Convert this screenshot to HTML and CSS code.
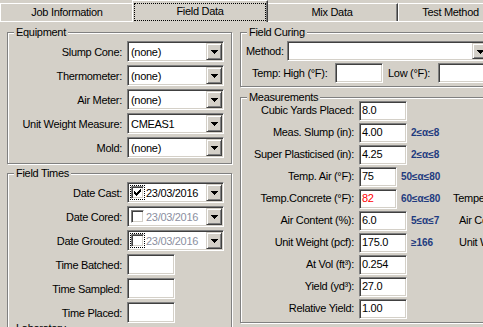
FILE: index.html
```html
<!DOCTYPE html>
<html lang="en">
<head>
    <meta charset="UTF-8">
    <title>Field Data</title>
    <link rel="stylesheet" href="styles.css">
</head>
<body>

    <div class="tabs">
        <div class="tab tab_job">Job Information</div>
        <div class="tab tab_field active"><span class="focus">Field Data</span></div>
        <div class="tab tab_mix">Mix Data</div>
        <div class="tab tab_test">Test Method</div>
    </div>

    <div class="panel">
        <div class="col_left">

            <div class="group equipment">
                <span class="legend">Equipment</span>
                <div class="form">
                    <span class="lbl">Slump Cone:</span>
                    <div class="combo"><span class="val">(none)</span><span class="drop"><svg width="7" height="4" viewBox="0 0 7 4"><path d="M0 0h7v1H0zM1 1h5v1H1zM2 2h3v1H2zM3 3h1v1H3z"/></svg></span></div>
                    <span class="lbl">Thermometer:</span>
                    <div class="combo"><span class="val">(none)</span><span class="drop"><svg width="7" height="4" viewBox="0 0 7 4"><path d="M0 0h7v1H0zM1 1h5v1H1zM2 2h3v1H2zM3 3h1v1H3z"/></svg></span></div>
                    <span class="lbl">Air Meter:</span>
                    <div class="combo"><span class="val">(none)</span><span class="drop"><svg width="7" height="4" viewBox="0 0 7 4"><path d="M0 0h7v1H0zM1 1h5v1H1zM2 2h3v1H2zM3 3h1v1H3z"/></svg></span></div>
                    <span class="lbl">Unit Weight Measure:</span>
                    <div class="combo"><span class="val">CMEAS1</span><span class="drop"><svg width="7" height="4" viewBox="0 0 7 4"><path d="M0 0h7v1H0zM1 1h5v1H1zM2 2h3v1H2zM3 3h1v1H3z"/></svg></span></div>
                    <span class="lbl">Mold:</span>
                    <div class="combo"><span class="val">(none)</span><span class="drop"><svg width="7" height="4" viewBox="0 0 7 4"><path d="M0 0h7v1H0zM1 1h5v1H1zM2 2h3v1H2zM3 3h1v1H3z"/></svg></span></div>
                </div>
            </div>

            <div class="group times">
                <span class="legend">Field Times</span>
                <div class="form">
                    <span class="lbl">Date Cast:</span>
                    <div class="combo date">
                        <span class="chk_focus on"><span class="chk"><svg width="7" height="7" viewBox="0 0 7 7"><path d="M6 0h1v1H6zM5 1h2v1H5zM0 2h1v1H0zM4 2h3v1H4zM0 3h2v1H0zM3 3h3v1H3zM0 4h5v1H0zM1 5h3v1H1zM2 6h1v1H2z"/></svg></span></span>
                        <span class="val">23/03/2016</span>
                        <span class="drop"><svg width="7" height="4" viewBox="0 0 7 4"><path d="M0 0h7v1H0zM1 1h5v1H1zM2 2h3v1H2zM3 3h1v1H3z"/></svg></span>
                    </div>
                    <span class="lbl">Date Cored:</span>
                    <div class="combo date off">
                        <span class="chk_focus"><span class="chk"></span></span>
                        <span class="val">23/03/2016</span>
                        <span class="drop"><svg width="7" height="4" viewBox="0 0 7 4"><path d="M0 0h7v1H0zM1 1h5v1H1zM2 2h3v1H2zM3 3h1v1H3z"/></svg></span>
                    </div>
                    <span class="lbl">Date Grouted:</span>
                    <div class="combo date off">
                        <span class="chk_focus on"><span class="chk"></span></span>
                        <span class="val">23/03/2016</span>
                        <span class="drop"><svg width="7" height="4" viewBox="0 0 7 4"><path d="M0 0h7v1H0zM1 1h5v1H1zM2 2h3v1H2zM3 3h1v1H3z"/></svg></span>
                    </div>
                    <span class="lbl">Time Batched:</span>
                    <div class="edit"></div>
                    <span class="lbl">Time Sampled:</span>
                    <div class="edit"></div>
                    <span class="lbl">Time Placed:</span>
                    <div class="edit"></div>
                </div>
                <div class="lab">Laboratory</div>
            </div>

        </div>

        <div class="col_right">

            <div class="group curing">
                <span class="legend">Field Curing</span>
                <div class="crow crow1">
                    <span class="lbl method">Method:</span>
                    <div class="combo wide"><span class="val"></span><span class="drop"><svg width="7" height="4" viewBox="0 0 7 4"><path d="M0 0h7v1H0zM1 1h5v1H1zM2 2h3v1H2zM3 3h1v1H3z"/></svg></span></div>
                </div>
                <div class="crow crow2">
                    <span class="lbl high">Temp: High (°F):</span>
                    <div class="edit c1"></div>
                    <span class="lbl low">Low (°F):</span>
                    <div class="edit c2"></div>
                </div>
            </div>

            <div class="group meas">
                <span class="legend">Measurements</span>
                <div class="mform">
                    <span class="mlbl">Cubic Yards Placed:</span>
                    <div class="mval"><div class="edit m">8.0</div></div>
                    <span></span>

                    <span class="mlbl">Meas. Slump (in):</span>
                    <div class="mval"><div class="edit m">4.00</div><span class="range">2≤α≤8</span></div>
                    <span></span>

                    <span class="mlbl">Super Plasticised (in):</span>
                    <div class="mval"><div class="edit m">4.25</div><span class="range">2≤α≤8</span></div>
                    <span></span>

                    <span class="mlbl">Temp. Air (°F):</span>
                    <div class="mval"><div class="edit m narrow">75</div><span class="range">50≤α≤80</span></div>
                    <span></span>

                    <span class="mlbl">Temp.Concrete (°F):</span>
                    <div class="mval"><div class="edit m narrow bad">82</div><span class="range">60≤α≤80</span></div>
                    <span class="extra">Temperature (°F):</span>

                    <span class="mlbl">Air Content (%):</span>
                    <div class="mval"><div class="edit m">6.0</div><span class="range">5≤α≤7</span></div>
                    <span class="extra shift">Air Content (%):</span>

                    <span class="mlbl">Unit Weight (pcf):</span>
                    <div class="mval"><div class="edit m">175.0</div><span class="range">≥166</span></div>
                    <span class="extra shift">Unit Weight (pcf):</span>

                    <span class="mlbl">At Vol (ft³):</span>
                    <div class="mval"><div class="edit m">0.254</div></div>
                    <span></span>

                    <span class="mlbl">Yield (yd³):</span>
                    <div class="mval"><div class="edit m">27.0</div></div>
                    <span></span>

                    <span class="mlbl">Relative Yield:</span>
                    <div class="mval"><div class="edit m">1.00</div></div>
                    <span></span>
                </div>
            </div>

        </div>
    </div>

</body>
</html>
```

FILE: styles.css
```css
*{margin:0;padding:0;box-sizing:border-box;}
html,body{width:483px;height:327px;overflow:hidden;}
body{background:#d4d0c8;font:11px/15px "Liberation Sans",Arial,sans-serif;letter-spacing:-0.3px;color:#000;}

/* tabs */
.tabs{display:flex;align-items:flex-start;width:640px;height:22px;border-bottom:1px solid #fff;}
.tab{flex:none;height:18px;margin-top:3px;padding-top:1px;text-align:center;border-top:1px solid #fff;border-left:1px solid #fff;border-right:1px solid #404040;box-shadow:inset -1px 0 0 #808080;}
.tab_job{width:134px;}
.tab_field{width:136px;}
.tab_mix{width:132px;}
.tab_test{width:105px;}
.tab.active{position:relative;z-index:1;height:22px;margin:0 -2px;padding:0;background:#d4d0c8;}
.tab .focus{display:block;height:18px;margin:2px 1px 0 1px;border:1px dotted #000;}

/* layout */
.panel{display:flex;align-items:flex-start;width:640px;padding:10px 0 0 7px;}
.col_left{flex:none;width:225px;}
.col_right{flex:none;width:300px;margin-left:8px;}

/* group box */
.group{position:relative;border:1px solid #808080;box-shadow:inset 1px 1px 0 #fff,1px 1px 0 #fff;}
.legend{position:absolute;top:-7px;left:6px;padding:0 2px;background:#d4d0c8;line-height:12px;}

.equipment{padding:8px 0 5px 0;}
.times{margin-top:9px;padding:8px 0 40px 0;}
.curing{padding:8px 0 3px 0;}
.meas{margin-top:10px;padding:3px 0 3px 0;}

.form{display:grid;grid-template-columns:119px auto;row-gap:3px;justify-items:start;}
.lbl{justify-self:end;padding:4px 5px 0 0;white-space:nowrap;}
.lab{margin-top:-2px;padding-left:8px;}

/* controls */
.combo{display:flex;width:97px;height:21px;padding:1px;background:#fff;border:1px solid;border-color:#808080 #fff #fff #808080;box-shadow:inset 1px 1px 0 #404040,inset -1px -1px 0 #d4d0c8;}
.combo .val{flex:1;padding:2px 0 0 2px;white-space:nowrap;overflow:hidden;}
.drop{flex:none;display:flex;align-items:center;justify-content:center;width:16px;height:100%;padding-top:1px;background:#d4d0c8;border:1px solid;border-color:#d4d0c8 #404040 #404040 #d4d0c8;box-shadow:inset 1px 1px 0 #fff,inset -1px -1px 0 #808080;}
.drop svg{display:block;}

.edit{width:48px;height:21px;padding:2px 0 0 2px;background:#fff;border:1px solid;border-color:#808080 #fff #fff #808080;box-shadow:inset 1px 1px 0 #404040,inset -1px -1px 0 #d4d0c8;white-space:nowrap;}

.date .chk_focus{flex:none;align-self:center;width:15px;height:15px;margin-left:1px;border:1px dotted transparent;}
.date .chk_focus.on{border-color:#000;}
.chk{display:block;width:13px;height:13px;padding:2px;background:#fff;border:1px solid;border-color:#808080 #fff #fff #808080;box-shadow:inset 1px 1px 0 #404040,inset -1px -1px 0 #d4d0c8;}
.chk svg{display:block;}
.date .val{padding-left:1px;}
.date.off .val{color:#8b8fa0;}

/* field curing */
.crow{display:flex;align-items:flex-start;}
.crow + .crow{margin-top:2px;}
.crow .lbl{justify-self:auto;padding:3px 0 0 0;}
.crow1{padding-left:5px;}
.crow1 .method{width:41px;}
.combo.wide{width:203px;height:20px;}
.combo.wide .val{padding-top:1px;}
.crow2{padding-left:11px;}
.crow2 .high{width:83px;}
.crow2 .low{width:55px;padding-left:5px;}
.crow2 .edit{height:20px;padding-top:1px;}
.crow2 .c1{width:48px;}
.crow2 .c2{width:60px;}

/* measurements */
.mform{display:grid;grid-template-columns:118px 94px auto;row-gap:2px;}
.mlbl{text-align:right;padding:2px 5px 0 0;white-space:nowrap;}
.mval{display:flex;align-items:center;}
.edit.m{height:20px;padding-top:1px;}
.edit.narrow{width:38px;}
.edit.bad{color:#f00;}
.range{margin-left:4px;font:bold 10px/12px "Liberation Sans",Arial,sans-serif;letter-spacing:0;color:#1f3b7f;white-space:nowrap;}
.extra{padding-top:2px;white-space:nowrap;}
.extra.shift{margin-left:6px;}
```
